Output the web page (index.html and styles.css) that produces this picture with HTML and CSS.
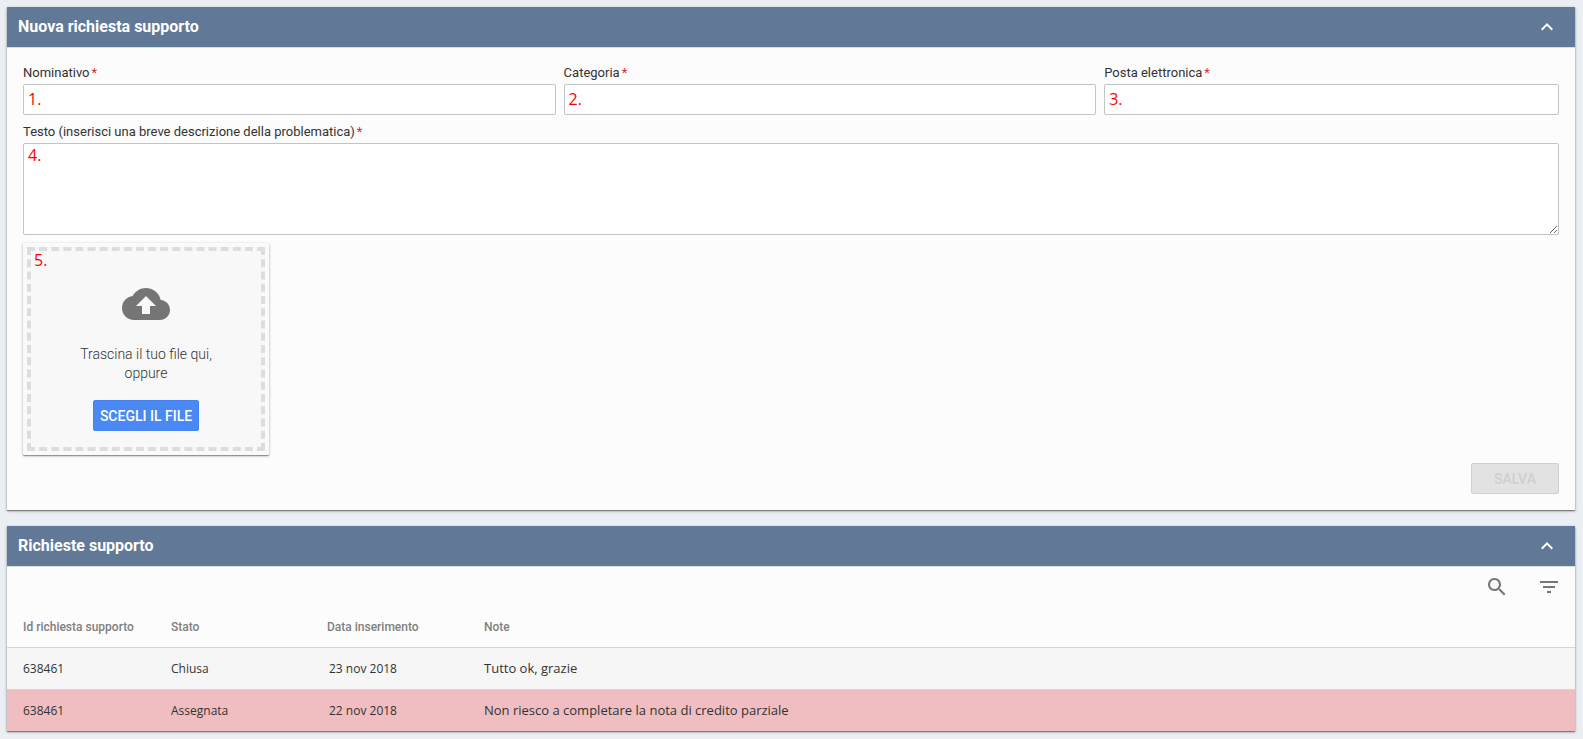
FILE: index.html
```html
<!DOCTYPE html>
<html lang="it">
<head>
<meta charset="utf-8">
<meta name="viewport" content="width=device-width, initial-scale=1">
<title>Richieste supporto</title>
<link rel="stylesheet" href="styles.css">
</head>
<body>
<main class="page">
  <section class="panel">
    <header class="panel-header">
      <h2 class="panel-title">Nuova richiesta supporto</h2>
      <button class="icon-button toggle" type="button" aria-label="Comprimi">
        <svg width="24" height="24" viewBox="0 0 24 24" fill="currentColor"><path d="M7.41 15.41 12 10.83l4.59 4.58L18 14l-6-6-6 6z"/></svg>
      </button>
    </header>
    <form class="form">
      <div class="fields">
        <div class="field">
          <label class="label" for="nominativo">Nominativo<span class="required">*</span></label>
          <input class="control" id="nominativo" type="text" value="1.">
        </div>
        <div class="field">
          <label class="label" for="categoria">Categoria<span class="required">*</span></label>
          <input class="control" id="categoria" type="text" value="2.">
        </div>
        <div class="field">
          <label class="label" for="posta">Posta elettronica<span class="required">*</span></label>
          <input class="control" id="posta" type="text" value="3.">
        </div>
      </div>
      <div class="field">
        <label class="label" for="testo">Testo (inserisci una breve descrizione della problematica)<span class="required">*</span></label>
        <textarea class="control control-area" id="testo">4.</textarea>
      </div>
      <div class="upload">
        <div class="dropzone">
          <span class="marker">5.</span>
          <svg class="cloud" width="48" height="48" viewBox="0 0 24 24" fill="currentColor" aria-hidden="true"><path d="M19.35 10.04C18.67 6.59 15.64 4 12 4 9.11 4 6.6 5.64 5.35 8.04 2.34 8.36 0 10.91 0 14c0 3.31 2.69 6 6 6h13c2.76 0 5-2.24 5-5 0-2.64-2.05-4.78-4.65-4.96zM14 13v4h-4v-4H7l5-5 5 5h-3z"/></svg>
          <p class="hint">Trascina il tuo file qui,<br>oppure</p>
          <button class="button button-primary" type="button">SCEGLI IL FILE</button>
        </div>
      </div>
      <div class="actions">
        <button class="button button-save" type="submit" disabled>SALVA</button>
      </div>
    </form>
  </section>

  <section class="panel">
    <header class="panel-header">
      <h2 class="panel-title">Richieste supporto</h2>
      <button class="icon-button toggle" type="button" aria-label="Comprimi">
        <svg width="24" height="24" viewBox="0 0 24 24" fill="currentColor"><path d="M7.41 15.41 12 10.83l4.59 4.58L18 14l-6-6-6 6z"/></svg>
      </button>
    </header>
    <div class="toolbar">
      <button class="icon-button" type="button" aria-label="Cerca">
        <svg width="24" height="24" viewBox="0 0 24 24" fill="currentColor"><path d="M15.5 14h-.79l-.28-.27C15.41 12.59 16 11.11 16 9.5 16 5.91 13.09 3 9.5 3S3 5.91 3 9.5 5.91 16 9.5 16c1.61 0 3.09-.59 4.23-1.57l.27.28v.79l5 4.99L20.49 19l-4.99-5zm-6 0C7.01 14 5 11.99 5 9.5S7.01 5 9.5 5 14 7.01 14 9.5 11.99 14 9.5 14z"/></svg>
      </button>
      <button class="icon-button" type="button" aria-label="Filtra">
        <svg width="24" height="24" viewBox="0 0 24 24" fill="currentColor"><path d="M10 18h4v-2h-4v2zM3 6v2h18V6H3zm3 7h12v-2H6v2z"/></svg>
      </button>
    </div>
    <table class="table">
      <colgroup><col class="col-id"><col class="col-state"><col class="col-date"><col></colgroup>
      <thead>
        <tr><th>Id richiesta supporto</th><th>Stato</th><th>Data inserimento</th><th>Note</th></tr>
      </thead>
      <tbody>
        <tr class="row-closed"><td>638461</td><td>Chiusa</td><td class="date">23 nov 2018</td><td class="note">Tutto ok, grazie</td></tr>
        <tr class="row-assigned"><td>638461</td><td>Assegnata</td><td class="date">22 nov 2018</td><td class="note">Non riesco a completare la nota di credito parziale</td></tr>
      </tbody>
    </table>
  </section>
</main>
</body>
</html>
```

FILE: styles.css
```css
* {
  box-sizing: border-box;
}

body {
  margin: 0;
  background: #ebeff4;
  color: #333;
  font-family: Roboto, "Liberation Sans", sans-serif;
}

.page {
  display: flex;
  flex-direction: column;
  gap: 16px;
  padding: 7px 8px 7px 7px;
}

.panel {
  background: #fcfcfc;
  box-shadow: 0 1px 3px rgba(0, 0, 0, 0.3), 0 1px 1px rgba(0, 0, 0, 0.35);
}

.panel-header {
  display: flex;
  align-items: center;
  justify-content: space-between;
  height: 41px;
  padding: 0 16px 0 11px;
  border-bottom: 1px solid #d9dce1;
  background: #617896;
  color: #fff;
}

.panel-title {
  margin: 0;
  font-size: 16px;
  line-height: 24px;
  font-weight: 700;
}

.icon-button {
  display: flex;
  padding: 0;
  border: 0;
  background: none;
  color: #757575;
}

.toggle {
  color: #fff;
}

.form {
  display: flex;
  flex-direction: column;
  gap: 8px;
  padding: 16px;
}

.fields {
  display: grid;
  grid-template-columns: repeat(2, calc(35% - 5px)) 1fr;
  gap: 8px;
}

.field {
  display: flex;
  flex-direction: column;
}

.label {
  padding-bottom: 2px;
  font-size: 13px;
  line-height: 18px;
}

.required {
  margin-left: 2px;
  color: #d32f2f;
}

.control {
  width: 100%;
  height: 31px;
  padding: 0 4px 2px;
  border: 1px solid #c4c4c4;
  border-radius: 2px;
  background: #fff;
  color: #f00;
  font-family: "Open Sans", "Noto Sans", sans-serif;
  font-size: 16px;
  line-height: 22px;
}

.control-area {
  display: block;
  height: 92px;
  resize: vertical;
}

.upload {
  align-self: flex-start;
  width: 246px;
  padding: 4px;
  border-radius: 1px;
  background: #fafafa;
  box-shadow: 0 1px 3px rgba(0, 0, 0, 0.3), 0 1px 1px rgba(0, 0, 0, 0.3);
}

.dropzone {
  position: relative;
  display: flex;
  flex-direction: column;
  align-items: center;
  padding: 29px 16px 16px;
  border: 4px dashed #ddd;
  background: #f8f8f8;
}

.marker {
  position: absolute;
  top: 0;
  left: 3px;
  color: #f00;
  font-family: "Open Sans", "Noto Sans", sans-serif;
  font-size: 16px;
  line-height: 18px;
}

.cloud {
  color: #757575;
}

.hint {
  margin: 17px 0;
  font-size: 14px;
  line-height: 19px;
  font-weight: 300;
  text-align: center;
}

.button {
  height: 31px;
  padding: 0 6px;
  border: 1px solid;
  border-radius: 2px;
  font-family: inherit;
  font-size: 14px;
  font-weight: 500;
}

.button-primary {
  border-color: #4781f0;
  background: #4a89f3;
  color: #fff;
}

.actions {
  display: flex;
  justify-content: flex-end;
}

.button-save {
  width: 88px;
  border-color: #d0d0d0;
  background: #e2e2e2;
  color: #cfcfcf;
}

.toolbar {
  display: flex;
  justify-content: flex-end;
  gap: 28px;
  padding: 8px 14px;
}

.table {
  width: 100%;
  border-collapse: collapse;
  table-layout: fixed;
  font-size: 12px;
}

.col-id {
  width: 164px;
}

.col-state {
  width: 156px;
}

.col-date {
  width: 157px;
}

.table th {
  height: 40px;
  padding: 0;
  color: #808080;
  font-weight: 500;
  text-align: left;
}

.table td {
  height: 42px;
  padding: 0;
  border-top: 1px solid #d6d6d6;
  font-family: "Open Sans", "Noto Sans", sans-serif;
}

.table th:first-child,
.table td:first-child {
  padding-left: 16px;
}

.table .date {
  padding-left: 2px;
}

.table .note {
  font-size: 13px;
}

.row-closed {
  background: #f6f6f6;
}

.row-assigned {
  background: #f0bec1;
}
```
